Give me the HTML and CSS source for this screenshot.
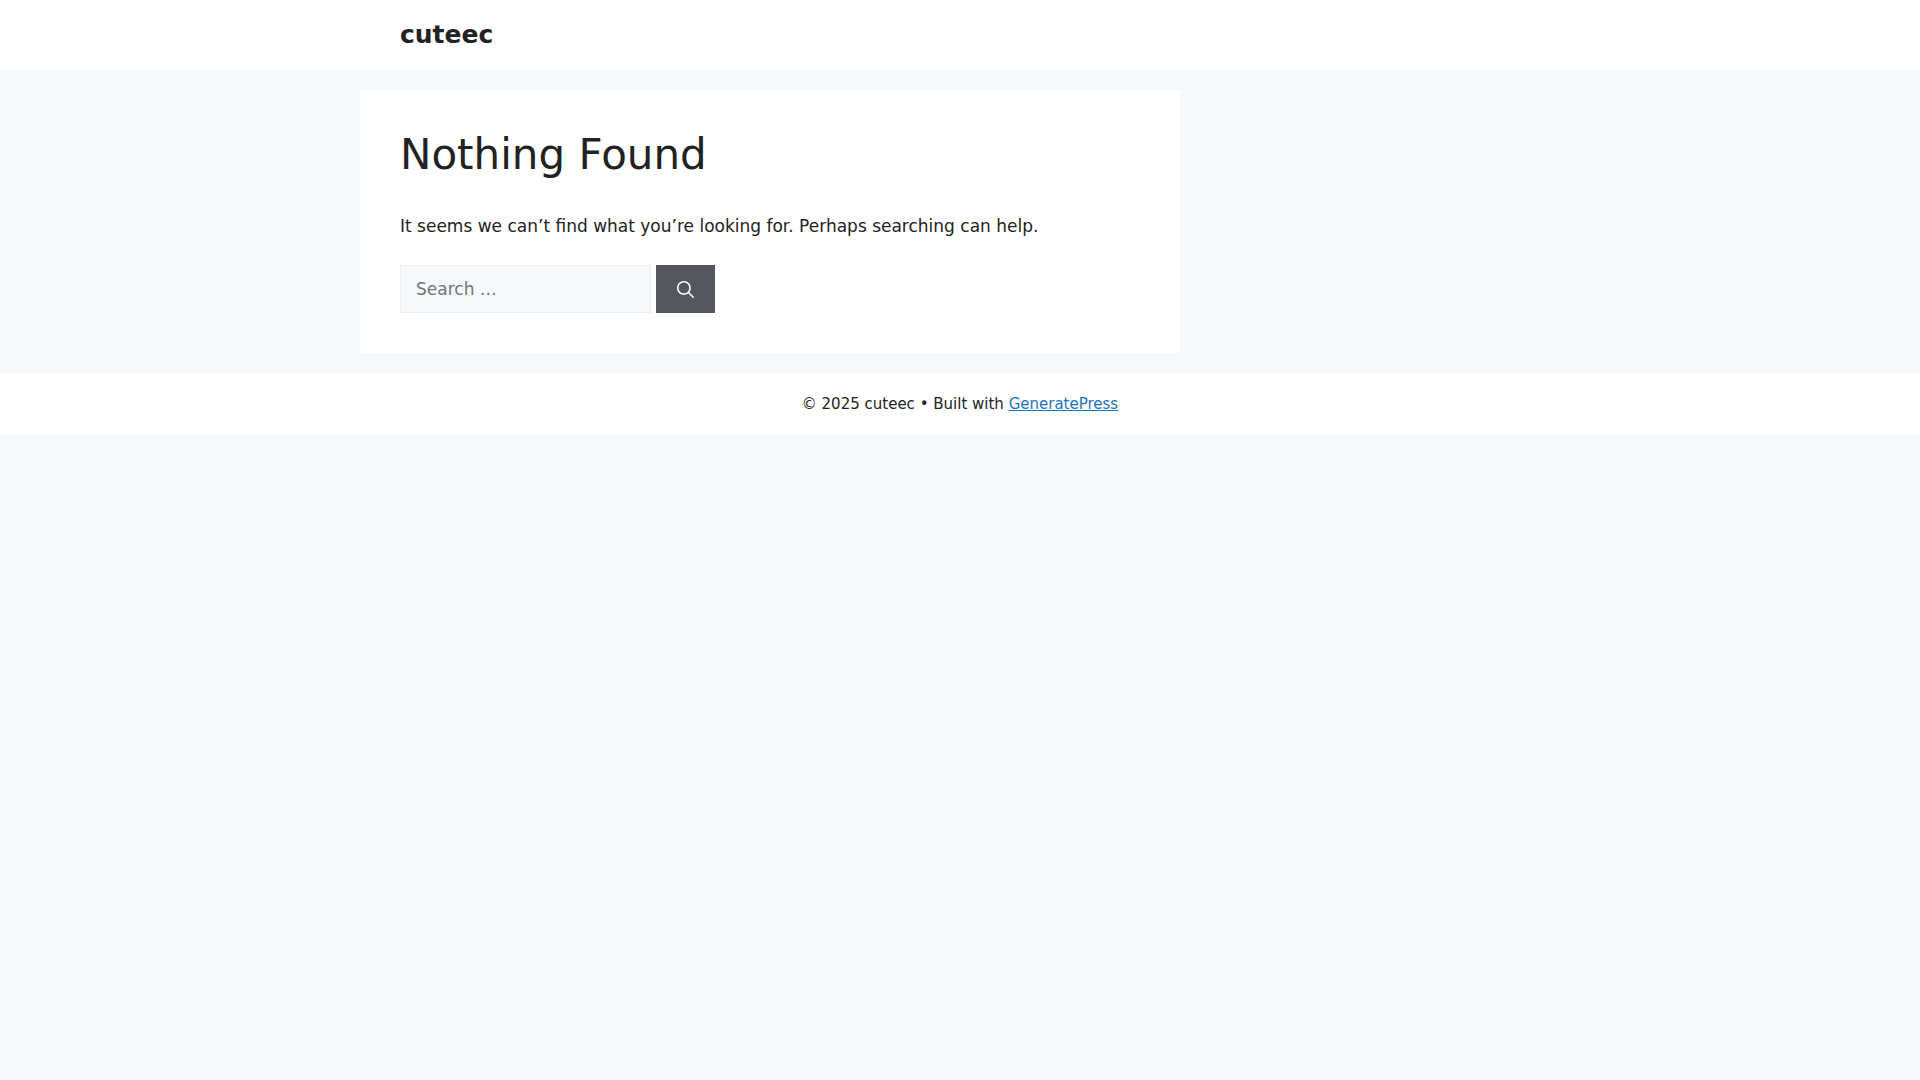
FILE: index.html
```
<!DOCTYPE html>
<html lang="en">

<head>
    <meta charset="UTF-8">
    <meta name="viewport" content="width=device-width, initial-scale=1.0">
    <title>cuteec</title>
    <link rel="stylesheet" href="styles.css">
</head>

<body>

    <header class="site-header">
        <div class="inside-header">
            <p class="main-title"><a href="/">cuteec</a></p>
        </div>
    </header>

    <div class="site-content">
        <main class="site-main">
            <h1 class="entry-title">Nothing Found</h1>
            <p>It seems we can’t find what you’re looking for. Perhaps searching can help.</p>

            <form class="search-form" method="get" action="/">
                <input type="search" class="search-field" placeholder="Search …" name="s" aria-label="Search for:">
                <button type="submit" class="search-submit" aria-label="Search">
                    <svg viewBox="0 0 512 512" width="17" height="17" aria-hidden="true">
                        <path fill="currentColor" fill-rule="evenodd" clip-rule="evenodd" d="M208 48c-88.366 0-160 71.634-160 160s71.634 160 160 160 160-71.634 160-160S296.366 48 208 48zM0 208C0 93.125 93.125 0 208 0s208 93.125 208 208c0 48.741-16.765 93.566-44.843 129.024l133.826 134.018c9.366 9.379 9.355 24.575-.025 33.941-9.379 9.366-24.575 9.355-33.941-.025L337.238 370.987C301.747 399.167 256.839 416 208 416 93.125 416 0 322.875 0 208z"/>
                    </svg>
                </button>
            </form>
        </main>
    </div>

    <footer class="site-info">
        <span>© 2025 cuteec</span> • Built with <a href="https://generatepress.com">GeneratePress</a>
    </footer>

</body>
</html>
```
FILE: styles.css
```
* {
    box-sizing: border-box;
}

body {
    margin: 0;
    background-color: #f7f8f9;
    color: #222222;
    font-family: "DejaVu Sans", sans-serif;
    font-size: 17px;
    line-height: 25px;
}

p {
    margin: 0 0 26px;
}

a {
    color: #1e73be;
}

.site-header,
.site-info {
    background-color: #ffffff;
}

.inside-header {
    max-width: 1200px;
    margin: 0 auto;
    padding: 20px 40px;
}

.main-title {
    margin: 0;
    font-size: 25px;
    font-weight: bold;
    line-height: 30px;
}

.main-title a {
    color: #222222;
    text-decoration: none;
}

.site-content {
    display: flex;
    max-width: 1200px;
    margin: 0 auto;
}

/* leaves 30% for the empty sidebar */
.site-main {
    width: calc(70% - 20px);
    margin: 20px 0;
    padding: 40px;
    background-color: #ffffff;
}

.entry-title {
    margin: 0 0 34px;
    font-size: 42px;
    font-weight: normal;
    line-height: 50px;
}

.search-form {
    display: flex;
    gap: 5px;
}

.search-field {
    width: 251px;
    padding: 10px 15px;
    border: 1px solid #eeeeee;
    border-radius: 0;
    background-color: #f7f8f9;
    color: #222222;
    font: inherit;
    line-height: 26px;
}

.search-submit {
    display: flex;
    align-items: center;
    padding: 10px 21px;
    border: none;
    background-color: #55555e;
    color: #ffffff;
    cursor: pointer;
}

.site-info {
    padding: 20px 40px;
    font-size: 15px;
    line-height: 22px;
    text-align: center;
}
```
